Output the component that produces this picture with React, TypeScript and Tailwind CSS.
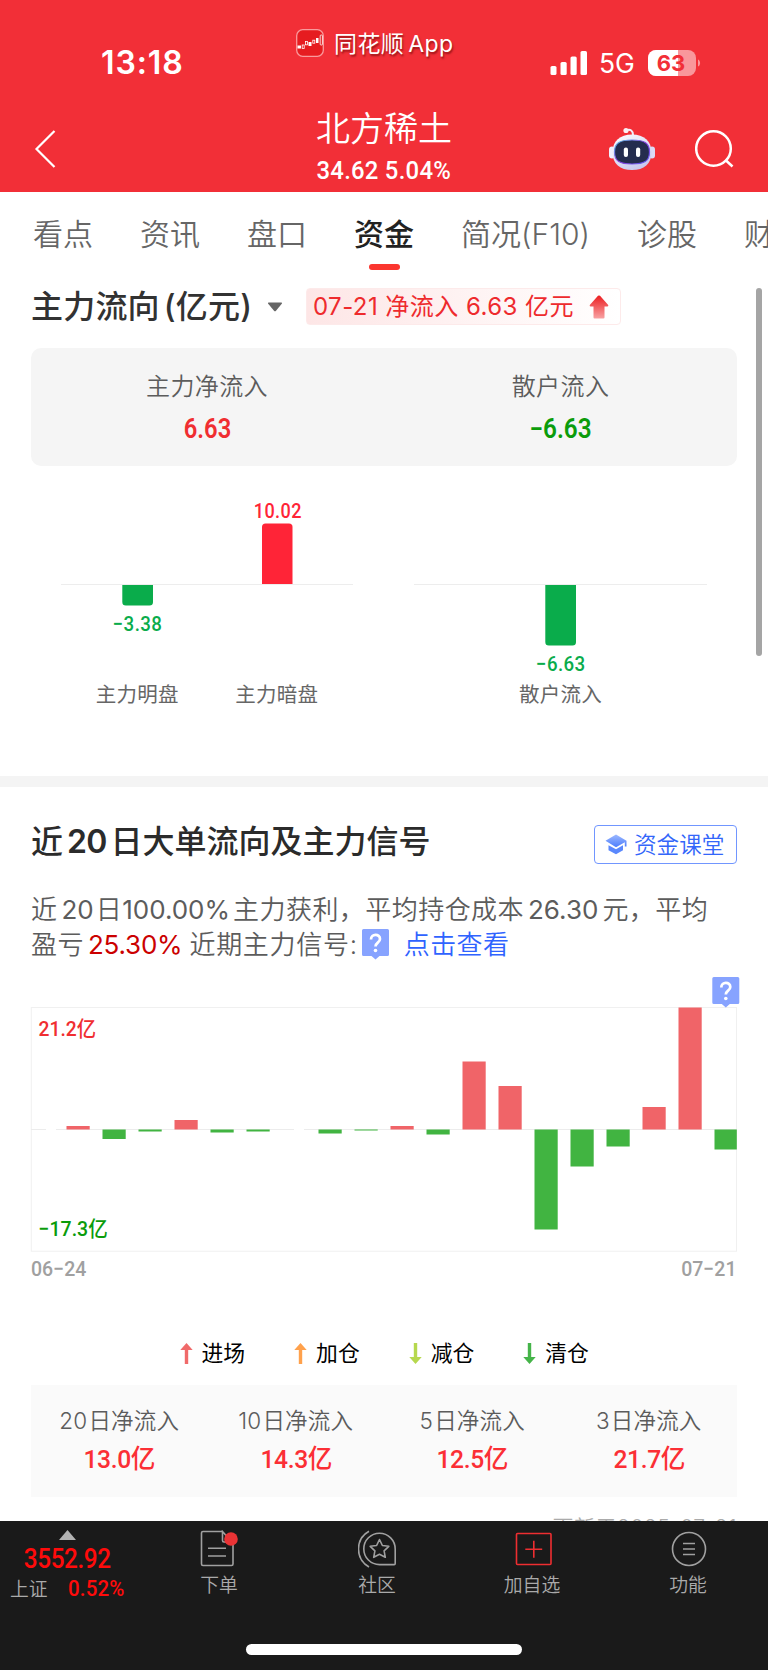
import React from "react";

const SANS = "font-['Inter','Noto_Sans_CJK_SC',sans-serif]";
const DIN = "font-['Roboto','Noto_Sans_CJK_SC',sans-serif]";

function StatusBar() {
  return (
    <div className="relative flex h-[101px] items-start justify-between pt-[42px] pr-[67px] pl-[101px]">
      <span className="text-[32px] leading-[41px] font-semibold tracking-[0.9px]">13:18</span>
      <div className="absolute top-[28px] left-[296px] flex h-[30px] items-center">
        <svg width="28" height="28" viewBox="0 0 28 28">
          <rect x="0.7" y="0.7" width="26.6" height="26.6" rx="6" fill="#e61c20" stroke="#f99a9c" strokeWidth="1.3" />
          <g fill="#fff">
            <rect x="1.5" y="16.5" width="3.5" height="3" />
            <rect x="12.5" y="13" width="3" height="4" />
            <rect x="20" y="9" width="2.5" height="5" />
          </g>
          <g fill="none" stroke="#fff" strokeWidth="0.8">
            <rect x="6.2" y="16" width="2" height="3.5" />
            <rect x="9.4" y="12.4" width="2" height="3.4" />
            <rect x="16.8" y="11.2" width="2" height="3" />
            <rect x="24.2" y="6" width="2.2" height="10" rx="0.8" />
          </g>
        </svg>
        <span className="mt-[2px] ml-[10px] text-[23px] leading-[30px] whitespace-nowrap [text-shadow:1px_2px_2px_rgba(90,0,0,0.6)]">
          <span className="tracking-[0.4px]">同花顺</span><span className="ml-[4px] tracking-[0.4px]">App</span>
        </span>
      </div>
      <div className="flex h-[41px] items-center">
        <svg width="38" height="26" viewBox="0 0 38 26" fill="#fff">
          <rect x="0.5" y="16" width="6" height="9" rx="1.6" />
          <rect x="10.5" y="12" width="6.2" height="13" rx="1.6" />
          <rect x="20.5" y="6.5" width="6.2" height="18.5" rx="1.6" />
          <rect x="30.5" y="1" width="6.5" height="24" rx="1.6" />
        </svg>
        <span className="ml-[11px] w-[36px] pt-[2px] text-[26.5px] leading-[41px] tracking-[-0.2px]">5G</span>
        <svg className="ml-[13px]" width="53" height="26" viewBox="0 0 53 26">
          <rect x="0" y="0" width="48" height="26" rx="8" fill="#f9979b" />
          <path d="M8 0H30V26H8A8 8 0 0 1 0 18V8A8 8 0 0 1 8 0Z" fill="#fff" />
          <path d="M50 9.5C52.8 10.5 52.8 15.5 50 16.5Z" fill="#f9979b" />
          <text x="23" y="20.8" textAnchor="middle" fontSize="22" fontWeight="700" fill="#f22f37">63</text>
        </svg>
      </div>
    </div>
  );
}

function Robot() {
  return (
    <svg width="48" height="44" viewBox="0 0 48 44">
      <defs>
        <linearGradient id="shell" x1="0" y1="0" x2="0.6" y2="1">
          <stop offset="0" stopColor="#ffffff" />
          <stop offset="1" stopColor="#c9c8ee" />
        </linearGradient>
        <linearGradient id="rim" x1="0" y1="0" x2="1" y2="1">
          <stop offset="0" stopColor="#58c8e8" />
          <stop offset="0.5" stopColor="#8a3fe0" />
          <stop offset="1" stopColor="#5c5cf0" />
        </linearGradient>
      </defs>
      <path d="M18.500 3.200C22.500 2 25 3.500 25 8" fill="none" stroke="#f2eefb" strokeWidth="2" />
      <circle cx="18" cy="3.500" r="2.600" fill="#fbeef2" />
      <rect x="1" y="19.500" width="6" height="12" rx="3" fill="#f1effc" />
      <rect x="41" y="19.500" width="6" height="12" rx="3" fill="#dcdaf6" />
      <path d="M24 7.500C36 7.500 43.500 14 43.500 25.500S36 43 24 43S4.500 37 4.500 25.500S12 7.500 24 7.500Z" fill="url(#shell)" />
      <path d="M24 13C36 13 41.500 15.500 41.500 25S36 37 24 37S6.500 34.500 6.500 25S12 13 24 13Z" fill="#242c4e" stroke="url(#rim)" strokeWidth="1.200" />
      <rect x="15.800" y="20.500" width="4.200" height="9.500" rx="2" fill="#fff" />
      <rect x="28" y="20.500" width="4.200" height="9.500" rx="2" fill="#fff" />
    </svg>
  );
}

function Header() {
  return (
    <header className="h-[192px] bg-[#f22f37] text-white">
      <StatusBar />
      <div className="grid h-[91px] grid-cols-[1fr_240px_1fr]">
        <svg className="mt-[28px] ml-[34px]" width="22" height="40" viewBox="0 0 22 40" fill="none" stroke="#fff" strokeWidth="2.2">
          <path d="M20.500 2L2.500 20L20.500 38" />
        </svg>
        <div className="flex flex-col items-center">
          <h1 className="mt-[8px] text-[34px] leading-[40px] font-[350]">北方稀土</h1>
          <p className={`mt-[1px] origin-center scale-x-90 text-[26.500px] leading-[40px] font-medium tracking-[0.300px] whitespace-nowrap ${DIN}`}>34.62 5.04%</p>
        </div>
        <div className="flex items-start">
          <div className="mt-[26px] ml-[104px]"><Robot /></div>
          <svg className="mt-[28px] ml-[39px]" width="40" height="42" viewBox="0 0 40 42" fill="none" stroke="#fff" strokeWidth="2.500">
            <circle cx="18.500" cy="19.500" r="17.300" />
            <path d="M30.500 31L37.500 37.500" />
          </svg>
        </div>
      </div>
    </header>
  );
}

function Tabs() {
  const tabs: [string, string][] = [
    ["看点", "w-[60px]"],
    ["资讯", "w-[60px]"],
    ["盘口", "w-[60px]"],
    ["资金", "w-[60px]"],
    ["简况(F10)", "w-[129px]"],
    ["诊股", "w-[60px]"],
    ["财务", "w-[60px]"],
  ];
  return (
    <nav className="flex h-[80px] gap-[47px] overflow-hidden pt-[14px] pl-[33px] text-[30px] leading-[56px] text-[#666]">
      {tabs.map(([t, w]) => (
        <div key={t} className={`flex shrink-0 flex-col items-center whitespace-nowrap ${w}`}>
          <span className={t === "资金" ? "font-medium text-[#222]" : "font-[350]"}>{t}</span>
          {t === "资金" && <i className="mt-[2px] h-[6px] w-[31px] rounded-full bg-[#fb362f]" />}
        </div>
      ))}
    </nav>
  );
}

function FlowTitle() {
  return (
    <div className="flex h-[76px] items-start pt-[15px] pl-[31px]">
      <h2 className="h-[40px] w-[221px] text-[32px] leading-[40px] font-medium tracking-[0.200px] whitespace-nowrap text-[#323232]">
        主力流向<span className="ml-[4px]">(</span>亿元)
      </h2>
      <svg className="mt-[15px] ml-[15px]" width="16" height="10" viewBox="0 0 16 10">
        <path d="M1.500 0.500H14.500Q15.500 0.800 14.800 1.700L9 8.700Q8 9.700 7 8.700L1.200 1.700Q0.500 0.800 1.500 0.500Z" fill="#666" />
      </svg>
      <div className="mt-[1px] ml-[23px] flex h-[37px] w-[315px] items-center rounded-[4px] border border-[#fdeaea] bg-gradient-to-r from-[#fde6e6] to-white pl-[6px] text-[24px] whitespace-nowrap text-[#ee2a2d]">
        <span className="w-[276px] leading-[36px] tracking-[0.450px]">07-21 净流入 6.63 亿元</span>
        <svg width="20" height="24" viewBox="0 0 20 24">
          <defs>
            <linearGradient id="up" x1="0" y1="0" x2="0" y2="1">
              <stop offset="0" stopColor="#ec1d20" />
              <stop offset="1" stopColor="#f8a2a3" />
            </linearGradient>
          </defs>
          <path d="M9 0.800Q10 0 11 0.800L19.200 10Q19.700 11.300 18.500 11.500H15.500V22.500Q15.500 23.500 14.500 23.500H5.500Q4.500 23.500 4.500 22.500V11.500H1.500Q0.300 11.300 0.800 10Z" fill="url(#up)" />
        </svg>
      </div>
    </div>
  );
}

function FlowSummary() {
  return (
    <div className="mx-[31px] grid h-[118px] grid-cols-2 rounded-[10px] bg-[#f5f5f5] pt-[19px] text-center">
      <div>
        <div className="-ml-px text-[24px] leading-[40px] font-[350] tracking-[0.400px] text-[#5c5c5c]">主力净流入</div>
        <div className={`scale-x-[0.880] text-[27px] leading-[44px] font-semibold text-[#f02e31] ${DIN}`}>6.63</div>
      </div>
      <div>
        <div className="text-[24px] leading-[40px] font-[350] tracking-[0.400px] text-[#5c5c5c]">散户流入</div>
        <div className={`scale-x-[0.900] text-[27px] leading-[44px] font-semibold text-[#0b9c0b] ${DIN}`}>−6.63</div>
      </div>
    </div>
  );
}

function FlowChart() {
  return (
    <svg className="block h-[310px] w-[768px]" viewBox="0 466 768 310">
      <path d="M61 584.500H353M414 584.500H707" stroke="#ededed" strokeWidth="1.200" />
      <path d="M122.300 585H153V602Q153 605.500 149.500 605.500H125.800Q122.300 605.500 122.300 602Z" fill="#0aac4b" />
      <path d="M262 584V527Q262 523.500 265.500 523.500H289Q292.500 523.500 292.500 527V584Z" fill="#ff2437" />
      <path d="M545.300 585H576V642Q576 645.500 572.500 645.500H548.800Q545.300 645.500 545.300 642Z" fill="#0aac4b" />
      <g className={DIN} fontSize="21" fontWeight="500" textAnchor="middle" letterSpacing="0.500">
        <text transform="translate(137.500 630.700) scale(0.890 1)" fill="#0aac4b">−3.38</text>
        <text transform="translate(277.800 518) scale(0.860 1)" fill="#ff2437">10.02</text>
        <text transform="translate(560.800 670.700) scale(0.890 1)" fill="#0aac4b">−6.63</text>
      </g>
      <g fontSize="20.500" fontWeight="400" fill="#666" textAnchor="middle" letterSpacing="0.300">
        <text x="137.300" y="701.500">主力明盘</text>
        <text x="276.800" y="701.500">主力暗盘</text>
        <text x="560.500" y="701.500">散户流入</text>
      </g>
    </svg>
  );
}

function BubbleShape() {
  return (
    <>
      <path d="M1.500 0H25.500Q27 0 27 1.500V25.500Q27 27 25.500 27H17.500L13.500 30.500L9.500 27H1.500Q0 27 0 25.500V1.500Q0 0 1.500 0Z" fill="#87a3ff" />
      <path d="M9 10.500C9 4.500 18 4.500 18 10C18 13.800 13.500 13.500 13.500 17.500" fill="none" stroke="#fff" strokeWidth="2.700" />
      <circle cx="13.500" cy="21.500" r="1.800" fill="#fff" />
    </>
  );
}

function SignalHead() {
  return (
    <div>
      <div className="flex h-[104px] items-start justify-between pr-[31px] pl-[31px]">
        <h2 className="mt-[35px] text-[32px] leading-[40px] font-medium whitespace-nowrap text-[#2b2b2b]">
          近<span className="mr-[4px] ml-[4px] font-semibold tracking-[-0.800px]">20</span>日大单流向及主力信号
        </h2>
        <button className="mt-[38px] flex h-[39px] w-[143px] items-center rounded-[4px] border-[1.500px] border-[#7196ff] pl-[10px] text-[22.600px] leading-[36px] font-[350] whitespace-nowrap text-[#3366fa]">
          <svg className="mr-[7px]" width="22" height="21" viewBox="0 0 22 21">
            <defs>
              <linearGradient id="cap" x1="0" y1="0" x2="0" y2="1">
                <stop offset="0" stopColor="#9db9ff" />
                <stop offset="1" stopColor="#4b7dfc" />
              </linearGradient>
            </defs>
            <path d="M11 0.500L21.500 6.800V12.500H19.800V8.200L11 13.200L0.500 6.800Z" fill="url(#cap)" />
            <path d="M3.500 11.200L11 15.300L18 11.200V16.200L11 20.300L3.500 16.200Z" fill="#5a88fd" />
          </svg>
          资金课堂
        </button>
      </div>
      <div className="h-[86px] pt-[2px] pl-[31px] text-[26px] leading-[34.600px] font-[350] whitespace-nowrap text-[#5c5c5c]">
        <div className="flex tracking-[0.450px]">
          近<span className="mr-[2px] ml-[4px] font-normal tracking-normal">20</span>日
          <span className="mr-[3px] font-normal tracking-normal">100.00%</span>主力获利，平均持仓成本
          <span className="mr-[4px] ml-[4px] font-normal tracking-normal">26.30</span>元，平均
        </div>
        <div className="flex tracking-[0.450px]">
          盈亏<span className="mr-[7px] ml-[4px] font-normal tracking-[-0.200px] text-[#cb0000]">25.30%</span>
          <span className="tracking-[0.700px]">近期主力信号:</span>
          <svg className="mt-[1px] ml-[4px]" width="27" height="31" viewBox="0 0 27 31"><BubbleShape /></svg>
          <a className="ml-[15px] text-[#2f63ff]">点击查看</a>
        </div>
      </div>
    </div>
  );
}

const BARS = [0, 3.5, -9.5, -2, 9.5, -3, -2, 0, -4, -1, 3.5, -5, 68, 43.5, -100, -37, -17, 22.5, 122, -20];

function SignalChart() {
  return (
    <svg className="block h-[320px] w-[768px]" viewBox="0 977 768 320">
      <rect x="31.300" y="1007.500" width="705.200" height="243.700" fill="none" stroke="#f0f0f0" strokeWidth="1" />
      <path d="M31 1129.500H46M56 1129.500H294M304 1129.500H737" stroke="#ececec" strokeWidth="1" />
      {BARS.map((v, i) => (
        <rect
          key={i}
          x={30.500 + i * 36}
          y={v > 0 ? 1129.500 - v : 1129.500}
          width={i === 19 ? 22.300 : 23.200}
          height={Math.abs(v)}
          fill={v > 0 ? "#f06468" : "#41b441"}
        />
      ))}
      <g className={DIN} fontSize="21" fontWeight="500">
        <text transform="translate(38.500 1035.500) scale(0.920 1)" fill="#f02e31">21.2亿</text>
        <text transform="translate(38.500 1236) scale(0.930 1)" fill="#0b9c0b">−17.3亿</text>
      </g>
      <g className={DIN} fontSize="21" fontWeight="500" fill="#a0a0a0">
        <text transform="translate(31 1276.300) scale(0.930 1)">06−24</text>
        <text transform="translate(736.500 1276.300) scale(0.930 1)" textAnchor="end">07−21</text>
      </g>
      <g transform="translate(712.300 977)"><BubbleShape /></g>
    </svg>
  );
}

function Arrow({ color, down = false }: { color: string; down?: boolean }) {
  return (
    <svg className={down ? "rotate-180" : ""} width="13" height="21" viewBox="0 0 13 21" fill={color}>
      <path d="M6.500 0L12.700 7H8.200V21H4.800V7H0.300Z" />
    </svg>
  );
}

function Legend() {
  const items: [string, string, boolean][] = [
    ["进场", "#f06a6a", false],
    ["加仓", "#ffa14c", false],
    ["减仓", "#b6d84e", true],
    ["清仓", "#45b449", true],
  ];
  return (
    <div className="flex h-[88px] items-start pt-[40px] pl-[179.500px] text-[21.800px] leading-[33px] text-black">
      {items.map(([t, c, d]) => (
        <div key={t} className="flex w-[114.600px] items-center gap-[9px]">
          <Arrow color={c} down={d} />
          {t}
        </div>
      ))}
    </div>
  );
}

function Totals() {
  const items = [
    ["20", "13.0亿"],
    ["10", "14.3亿"],
    ["5", "12.5亿"],
    ["3", "21.7亿"],
  ];
  return (
    <div className="mx-[31px] grid h-[112px] grid-cols-4 bg-[#fafafa] pt-[16px] text-center">
      {items.map(([n, v]) => (
        <div key={n}>
          <div className="text-[22.500px] leading-[40px] font-[350] tracking-[0.200px] whitespace-nowrap text-[#5c5c5c]">
            <span className="mr-[1px]">{n}</span>日净流入
          </div>
          <div className={`scale-x-[0.930] text-[26.500px] leading-[36px] font-medium tracking-[-0.400px] text-[#fb2f35] ${DIN}`}>{v}</div>
        </div>
      ))}
    </div>
  );
}

const navIcons: Record<string, React.ReactNode> = {
  下单: (
    <>
      <path d="M22 1.500H3Q1.500 1.500 1.500 3V34Q1.500 35.500 3 35.500H31.500Q33 35.500 33 34V12H24Q22.500 12 22.500 10.500V1.500L31 11" />
      <path d="M8 18.300H26M8 26H26" />
      <circle cx="31" cy="9" r="6.800" fill="#ea3335" stroke="none" />
    </>
  ),
  社区: (
    <>
      <path d="M21.500 3.200A15.700 15.700 0 1 0 21.500 34.600H36.200Q37.200 34.600 37.200 33.500V19A15.700 15.700 0 0 0 21.500 3.200Z" />
      <path d="M11 1.200C-3 9 -3 29 11 37" />
      <path d="M21.500 9.500L24.400 15.500L30.800 16.300L26.100 20.800L27.300 27.300L21.500 24.200L15.700 27.300L16.900 20.800L12.200 16.300L18.600 15.500Z" strokeLinejoin="round" />
    </>
  ),
  加自选: (
    <g stroke="#ee2e31">
      <rect x="3.500" y="3.500" width="34.500" height="31" rx="1" />
      <path d="M12.300 19.300H29.200M20.800 10.800V27.700" />
    </g>
  ),
  功能: (
    <>
      <circle cx="20" cy="19" r="16.500" />
      <path d="M14 13.500H26M14 19H26M14 24.500H26" />
    </>
  ),
};

function BottomNav() {
  const items: [string, string][] = [
    ["下单", "w-[36px] ml-[66px]"],
    ["社区", "w-[36px] ml-[122px]"],
    ["加自选", "w-[56px] ml-[109px]"],
    ["功能", "w-[36px] ml-[110px]"],
  ];
  return (
    <footer className="flex h-[149px] flex-col bg-[#1a1a1a] text-[#aaa]">
      <div className="flex h-[123px]">
        <div className="flex w-[135px] flex-col items-center">
          <svg className="mt-[9px]" width="17" height="10" viewBox="0 0 17 10">
            <path d="M8.500 0L17 10H0Z" fill="#b2b2b2" />
          </svg>
          <div className={`mt-[3px] scale-x-90 text-[27px] leading-[32px] font-medium tracking-[-0.450px] text-[#ff0b0b] ${DIN}`}>3552.92</div>
          <div className="flex w-[135px] pl-[10px] leading-[26px]">
            <span className="w-[58px] pt-[2px] text-[18.800px] font-[350]">上证</span>
            <span className={`origin-left scale-x-[0.910] text-[22.500px] font-medium tracking-[0.200px] text-[#ff0b0b] ${DIN}`}>0.52%</span>
          </div>
        </div>
        {items.map(([t, c]) => (
          <div key={t} className={`flex flex-col items-center pt-[9px] ${c}`}>
            <svg className="shrink-0" width="39" height="39" viewBox="0 0 39 39" fill="none" stroke="#a0a0a0" strokeWidth="1.600">
              {navIcons[t]}
            </svg>
            <span className="text-[18.800px] leading-[33px] font-[350] whitespace-nowrap">{t}</span>
          </div>
        ))}
      </div>
      <div className="ml-[246px] h-[11px] w-[276px] rounded-full bg-white" />
    </footer>
  );
}

export default function App() {
  return (
    <div className={`relative flex h-[1670px] w-[768px] flex-col overflow-hidden bg-white *:shrink-0 ${SANS}`}>
      <Header />
      <Tabs />
      <FlowTitle />
      <FlowSummary />
      <FlowChart />
      <div className="h-[11px] bg-[#f4f4f4]" />
      <SignalHead />
      <SignalChart />
      <Legend />
      <Totals />
      <div className="flex h-[24px] justify-end overflow-hidden pt-[14px] pr-[31px] text-[21px] leading-[34px] font-[350] tracking-[0.500px] whitespace-nowrap text-[#aaa]">
        更新于2025-07-21
      </div>
      <BottomNav />
      <div className="absolute top-[288px] left-[756px] h-[368px] w-[6px] rounded-full bg-[#a5a5a5]" />
    </div>
  );
}
